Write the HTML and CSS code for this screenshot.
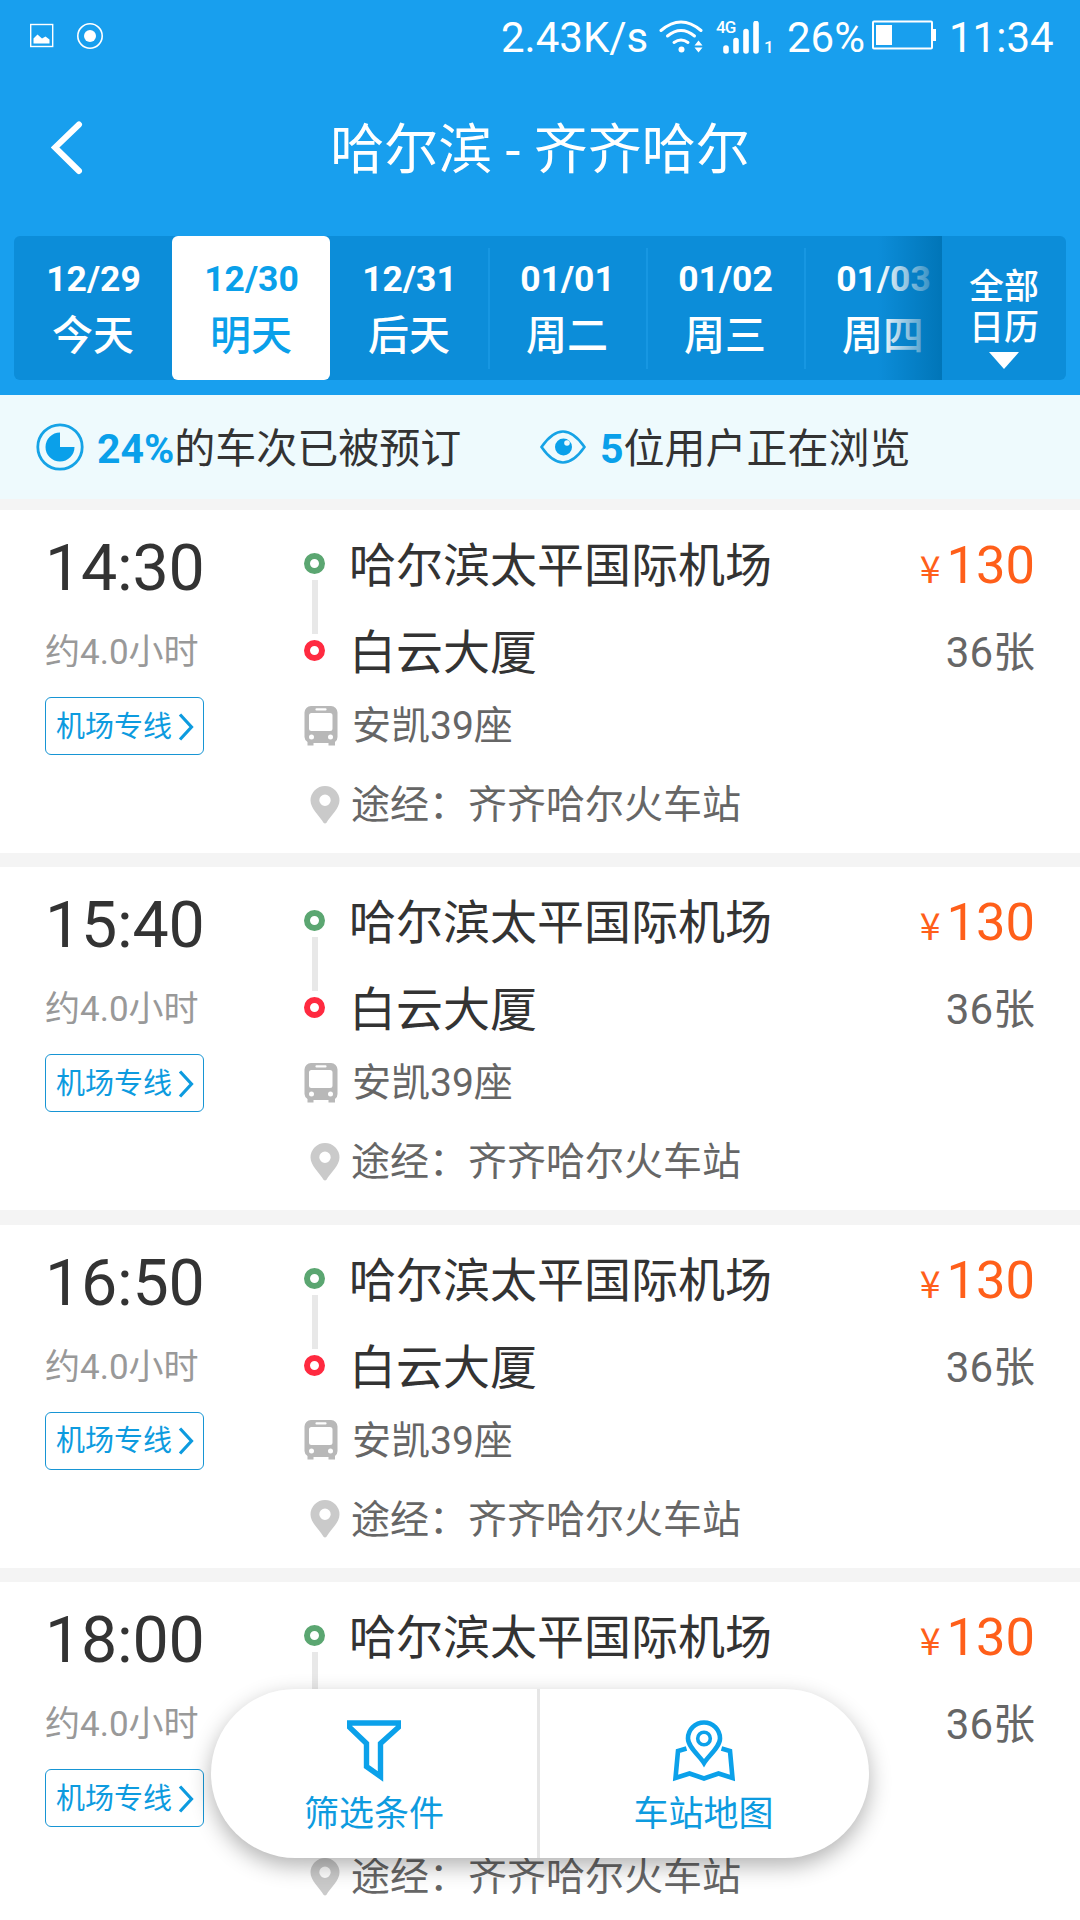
FILE: index.html
```html
<!DOCTYPE html>
<html lang="zh-CN">
<head>
<meta charset="utf-8">
<title>哈尔滨 - 齐齐哈尔</title>
<link rel="stylesheet" href="styles.css">
</head>
<body>
<svg class="defs" aria-hidden="true">
  <symbol id="arrow" viewBox="0 0 16 28"><path d="M2 1.500l11.500 12.500L2 26.500" fill="none" stroke="currentColor" stroke-width="3.200"/></symbol>
  <symbol id="route" viewBox="0 0 22 108">
    <circle cx="11.500" cy="10.500" r="7.500" fill="none" stroke="#5ba671" stroke-width="6"/>
    <path d="M12 27v54" stroke="#e8e8e8" stroke-width="6"/>
    <circle cx="11.500" cy="97.500" r="7.500" fill="none" stroke="#ff2a40" stroke-width="6"/>
  </symbol>
  <symbol id="bus" viewBox="0 0 34 40">
    <path fill="#b8b8b8" fill-rule="evenodd" d="M7 0h20a6.500 6.500 0 0 1 6.500 6.500V31a6 6 0 0 1-2.500 5v3.500h-6.500V37h-15v2.500H3.500V36A6 6 0 0 1 .5 31V6.500A6.500 6.500 0 0 1 7 0zM12.500 2.300a1 1 0 0 0 0 2.200h9a1 1 0 0 0 0-2.200zM7.500 7A2.500 2.500 0 0 0 5 9.500v13A2.500 2.500 0 0 0 7.500 25h18.500a2.500 2.500 0 0 0 2.500-2.500v-13A2.500 2.500 0 0 0 26 7zM7.500 28.500a2.500 2.500 0 1 0 0 5a2.500 2.500 0 0 0 0-5zM26.500 28.500a2.500 2.500 0 1 0 0 5a2.500 2.500 0 0 0 0-5z"/>
  </symbol>
  <symbol id="pin" viewBox="0 0 30 38">
    <path fill="#cacaca" fill-rule="evenodd" d="M15 0a14.500 14.500 0 0 1 14.500 14.500C29.500 23 20 30 16.500 36.800q-1.500 1.500-3 0C10 30 .5 23 .5 14.500A14.500 14.500 0 0 1 15 0zM15 8.500a5.700 5.700 0 1 0 0 11.400a5.700 5.700 0 0 0 0-11.400z"/>
  </symbol>
</svg>

<header class="header">
  <div class="status">
    <svg class="status-left" width="80" height="30" viewBox="0 0 80 30">
      <rect x="0.700" y="3.500" width="22" height="22" fill="none" stroke="#fff" stroke-width="1.400"/>
      <path d="M3.500 22.500v-5l4-4 4.500 4 3.500-2 4 3v4z" fill="#fff"/>
      <circle cx="60" cy="15" r="12.200" fill="none" stroke="#fff" stroke-width="1.600"/>
      <circle cx="60" cy="15" r="6" fill="#fff"/>
    </svg>
    <span class="status-text speed">2.43K/s</span>
    <svg class="wifi" width="44" height="34" viewBox="0 0 44 34">
      <g fill="none" stroke="#fff" stroke-width="3" stroke-linecap="round">
        <path d="M2 10.500Q22-6.500 42 10.500"/><path d="M8.500 16Q22 5 35.500 16"/><path d="M15 22.500Q22 17.500 29 22.500"/>
      </g>
      <circle cx="22.500" cy="29.500" r="3" fill="#fff"/>
      <path d="M35.500 25.500l4-5 4 5zM35.500 27.500h8l-4 5z" fill="#fff"/>
    </svg>
    <span class="signal">
      <span class="net">4G</span>
      <svg width="37" height="33" viewBox="0 0 37 33"><path d="M3 27v3M13 19.500V30M23 10.500V30M33 2.500V30" stroke="#fff" stroke-width="5.600" stroke-linecap="round"/></svg>
      <span class="sim">1</span>
    </span>
    <span class="status-text percent">26%</span>
    <svg class="battery" width="65" height="30" viewBox="0 0 65 30">
      <rect x="1" y="1.500" width="59" height="27" rx="1" fill="none" stroke="#fff" stroke-width="2"/>
      <path d="M4 5h16v20H4zM60 9h4v12h-4z" fill="#fff"/>
    </svg>
    <span class="status-text clock">11:34</span>
  </div>
  <div class="titlebar">
    <svg class="back" width="32" height="54" viewBox="0 0 32 54"><path d="M28 3.500L4 26.500l24 23.500" fill="none" stroke="#fff" stroke-width="6" stroke-linecap="round"/></svg>
    <h1 class="title">哈尔滨 - 齐齐哈尔</h1>
  </div>
  <nav class="dates">
    <div class="days">
      <div class="day"><b>12/29</b><span>今天</span></div>
      <div class="day active"><b>12/30</b><span>明天</span></div>
      <div class="day"><b>12/31</b><span>后天</span></div>
      <div class="day lined"><b>01/01</b><span>周二</span></div>
      <div class="day lined"><b>01/02</b><span>周三</span></div>
      <div class="day lined"><b>01/03</b><span>周四</span></div>
    </div>
    <div class="calendar"><span>全部</span><span>日历</span><i class="caret"></i></div>
  </nav>
</header>

<section class="notice">
  <svg class="pie" width="48" height="48" viewBox="0 0 48 48">
    <circle cx="24" cy="24" r="22.200" fill="none" stroke="#16a3e6" stroke-width="2.800"/>
    <path d="M24 9.500A14.500 14.500 0 1 0 38.500 24H24z" fill="#0aa0ea"/>
  </svg>
  <p class="booked"><b>24%</b>的车次已被预订</p>
  <svg class="eye" width="46" height="34" viewBox="0 0 46 34">
    <path d="M1.500 17Q23-14 44.500 17Q23 48 1.500 17z" fill="none" stroke="#16a3e6" stroke-width="2.600"/>
    <circle cx="23.500" cy="17" r="8.500" fill="#0aa0ea"/>
    <circle cx="27" cy="13" r="2.800" fill="#eefafd"/>
  </svg>
  <p class="viewing"><b>5</b>位用户正在浏览</p>
</section>

<main class="trips">
  <article class="trip">
    <div class="when"><div class="time">14:30</div><div class="duration">约4.0小时</div><div class="tag">机场专线<svg width="16" height="28"><use href="#arrow"/></svg></div></div>
    <svg class="route" width="22" height="108"><use href="#route"/></svg>
    <div class="info">
      <div class="station">哈尔滨太平国际机场</div><div class="station end">白云大厦</div>
      <div class="detail seats"><svg width="34" height="40"><use href="#bus"/></svg>安凯39座</div>
      <div class="detail via"><svg width="30" height="38"><use href="#pin"/></svg>途经：齐齐哈尔火车站</div>
    </div>
    <div class="sale"><div class="price"><small>¥</small>130</div><div class="left">36张</div></div>
  </article>
  <article class="trip">
    <div class="when"><div class="time">15:40</div><div class="duration">约4.0小时</div><div class="tag">机场专线<svg width="16" height="28"><use href="#arrow"/></svg></div></div>
    <svg class="route" width="22" height="108"><use href="#route"/></svg>
    <div class="info">
      <div class="station">哈尔滨太平国际机场</div><div class="station end">白云大厦</div>
      <div class="detail seats"><svg width="34" height="40"><use href="#bus"/></svg>安凯39座</div>
      <div class="detail via"><svg width="30" height="38"><use href="#pin"/></svg>途经：齐齐哈尔火车站</div>
    </div>
    <div class="sale"><div class="price"><small>¥</small>130</div><div class="left">36张</div></div>
  </article>
  <article class="trip">
    <div class="when"><div class="time">16:50</div><div class="duration">约4.0小时</div><div class="tag">机场专线<svg width="16" height="28"><use href="#arrow"/></svg></div></div>
    <svg class="route" width="22" height="108"><use href="#route"/></svg>
    <div class="info">
      <div class="station">哈尔滨太平国际机场</div><div class="station end">白云大厦</div>
      <div class="detail seats"><svg width="34" height="40"><use href="#bus"/></svg>安凯39座</div>
      <div class="detail via"><svg width="30" height="38"><use href="#pin"/></svg>途经：齐齐哈尔火车站</div>
    </div>
    <div class="sale"><div class="price"><small>¥</small>130</div><div class="left">36张</div></div>
  </article>
  <article class="trip">
    <div class="when"><div class="time">18:00</div><div class="duration">约4.0小时</div><div class="tag">机场专线<svg width="16" height="28"><use href="#arrow"/></svg></div></div>
    <svg class="route" width="22" height="108"><use href="#route"/></svg>
    <div class="info">
      <div class="station">哈尔滨太平国际机场</div><div class="station end">白云大厦</div>
      <div class="detail seats"><svg width="34" height="40"><use href="#bus"/></svg>安凯39座</div>
      <div class="detail via"><svg width="30" height="38"><use href="#pin"/></svg>途经：齐齐哈尔火车站</div>
    </div>
    <div class="sale"><div class="price"><small>¥</small>130</div><div class="left">36张</div></div>
  </article>
</main>

<div class="actions">
  <div class="action">
    <svg width="54" height="62" viewBox="0 0 54 62"><path d="M2.500 3h49v4.200L33.500 23.500v33L19.500 46.500v-23L2.500 7.200z" fill="none" stroke="#0ba1ea" stroke-width="5.400"/></svg>
    <span>筛选条件</span>
  </div>
  <div class="action">
    <svg width="64" height="62" viewBox="0 0 64 62"><g fill="none" stroke="#0ba1ea" stroke-width="4.600">
      <path d="M32 43C28 36.500 16 27 16 18.500a16 16 0 0 1 32 0C48 27 36 36.500 32 43z"/>
      <circle cx="32" cy="18.500" r="6.300" stroke-width="3.600"/>
      <path d="M14.500 28.500l-8.500 2.500L3.500 58l14-4.500L32 58.500l14.500-5L60.500 58 58 31l-8.500-2.500"/>
    </g></svg>
    <span>车站地图</span>
  </div>
</div>
</body>
</html>
```

FILE: styles.css
```css
* { box-sizing: border-box; margin: 0; padding: 0; }

body {
  position: relative;
  width: 1080px;
  height: 1920px;
  overflow: hidden;
  background: #f4f4f4;
  color: #333;
  font-family: Roboto, "Noto Sans CJK SC", sans-serif;
}

svg { display: block; flex: none; }
.defs { position: absolute; width: 0; height: 0; }

/* Header */
.header {
  height: 395px;
  background: #189fee;
  color: #fff;
}

.status {
  display: flex;
  align-items: center;
  height: 74px;
  padding: 0 23px 0 30px;
}
.status-left { margin-right: auto; margin-bottom: 2px; }
.status-text { padding-top: 2px; font-size: 42px; line-height: 74px; white-space: nowrap; }
.speed { width: 147px; margin-right: 11px; }
.wifi { margin-right: 13px; }
.signal { display: flex; align-items: flex-end; width: 71px; height: 33px; }
.signal svg { margin-left: -14px; }
.net { align-self: flex-start; width: 21px; font-size: 17px; line-height: 12px; letter-spacing: -0.8px; font-weight: 500; }
.sim { margin-left: 4px; font-size: 17px; line-height: 14px; font-weight: 500; }
.percent { width: 85px; }
.battery { margin-right: 12px; margin-bottom: 4px; }
.clock { width: 108px; }

.titlebar {
  display: grid;
  grid-template-columns: 81px 1fr 81px;
  align-items: center;
  height: 148px;
}
.back { margin-left: 51px; }
.title { font-size: 54px; font-weight: 400; line-height: 74px; text-align: center; padding-top: 6px; }

.dates {
  display: flex;
  height: 144px;
  margin: 14px 14px 0;
  border-radius: 6px;
  background: #0c8dd9;
  overflow: hidden;
}
.days { position: relative; display: flex; width: 928px; overflow: hidden; }
.days::after {
  content: "";
  position: absolute;
  inset: 0 0 0 auto;
  width: 64px;
  background: linear-gradient(90deg, rgba(0, 116, 182, 0), rgba(0, 116, 182, 0.95));
}
.day {
  flex: none;
  display: flex;
  flex-direction: column;
  align-items: center;
  width: 158px;
  padding-top: 22px;
}
.day b { padding-left: 1px; font-size: 35.500px; line-height: 42px; }
.day span { margin-top: 11px; font-size: 41px; line-height: 50px; font-weight: 500; }
.active { border-radius: 6px; background: #fff; color: #0aa0ea; }
.lined { background: linear-gradient(#1797e2, #1797e2) 0 12px / 2px 121px no-repeat; }
.calendar {
  flex: 1;
  display: flex;
  flex-direction: column;
  align-items: center;
  padding-top: 31px;
  font-size: 35px;
  line-height: 41px;
  font-weight: 500;
}
.caret { margin-top: 3px; border: 15px solid transparent; border-top: 17px solid #fff; border-bottom: 0; }

/* Booking notice */
.notice {
  display: flex;
  align-items: center;
  height: 104px;
  padding-left: 36px;
  background: #eefafd;
  font-size: 41px;
  line-height: 60px;
}
.notice p { padding-top: 4px; }
.notice b { color: #0aa0ea; }
.booked { width: 443px; margin-left: 13px; }
.viewing { margin-left: 14px; }

/* Trips */
.trips { display: flex; flex-direction: column; gap: 14.400px; margin-top: 11px; }
.trip {
  flex: none;
  display: flex;
  height: 343px;
  padding: 0 45px;
  background: #fff;
}
.when { width: 258px; padding-top: 20px; }
.time { font-size: 64.500px; letter-spacing: -0.200px; line-height: 76px; }
.duration { margin-top: 22px; font-size: 35px; line-height: 50px; color: #999; }
.tag {
  display: flex;
  align-items: center;
  gap: 6px;
  width: 159px;
  height: 58px;
  margin-top: 19px;
  padding: 1px 0 0 10px;
  border: 1px solid #1795d4;
  border-radius: 6px;
  color: #0d9bdf;
  font-size: 29px;
  line-height: 56px;
}
.route { margin-top: 43px; }
.info { flex: 1; padding-top: 26px; }
.station { padding-left: 24px; font-size: 47px; line-height: 60px; }
.end { margin-top: 27px; padding-left: 24px; }
.detail { display: flex; align-items: center; color: #666; font-size: 39px; line-height: 50px; }
.detail svg { margin-top: -1px; }
.seats { gap: 14px; margin: 18px 0 0 -21px; }
.via { gap: 11px; margin: 29px 0 0 -15px; }
.sale { text-align: right; }
.price {
  display: flex;
  align-items: baseline;
  justify-content: flex-end;
  gap: 6px;
  padding-top: 25px;
  color: #ff5f1a;
  font-size: 52.500px;
  line-height: 60px;
}
.price small { font-family: "Noto Sans CJK SC", sans-serif; font-size: 37.500px; font-weight: 400; line-height: 50px; }
.left { margin-top: 33px; color: #666; font-size: 42px; line-height: 50px; }

/* Floating actions */
.actions {
  position: absolute;
  left: 211px;
  top: 1689px;
  display: flex;
  width: 658px;
  height: 169px;
  border-radius: 85px;
  background: #fff;
  box-shadow: 0 8px 22px rgba(0, 0, 0, 0.3);
}
.action {
  width: 326px;
  display: flex;
  flex-direction: column;
  align-items: center;
  padding-top: 31px;
  color: #0d9bdf;
  font-size: 35px;
  line-height: 50px;
}
.action + .action { width: 332px; border-left: 3px solid #e6e6e6; padding-right: 2px; }
.action span { margin-top: 8px; }
```
